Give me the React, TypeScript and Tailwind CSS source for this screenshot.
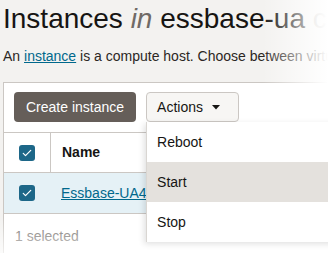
import React from "react";

function Check() {
  return (
    <span className="flex h-4 w-4 items-center justify-center rounded-[3px] bg-[#1d6788]">
      <svg viewBox="0 0 16 16" className="h-3 w-3" fill="none">
        <path d="M3 8.5l3 3 7-7" stroke="#fff" strokeWidth="1.6" strokeLinecap="round" strokeLinejoin="round" />
      </svg>
    </span>
  );
}

function App() {
  const menuItems = ["Reboot", "Start", "Stop"];

  return (
    <div className="relative h-[253px] w-[328px] overflow-hidden bg-[#f3f2f0] font-['Liberation_Sans',Arial,sans-serif] text-[#161513]">
      <div className="pl-[3px]">
        <h1 className="whitespace-nowrap pt-[3px] text-[28px] leading-[32px]">
          Instances <i className="text-[#6f6a66]">in</i> essbase-ua <span className="text-[#bdb9b5]">compartment</span>
        </h1>
        <p className="mt-[11px] whitespace-nowrap text-[14px] leading-5 text-[#2b2724]">
          An <span className="text-[#00688c] underline">instance</span> is a compute host. Choose between virtual machines and bare metal.
        </p>
      </div>

      {/* panel */}
      <div className="ml-[3px] mt-[16px] w-[400px] border border-[#cbc7c3] bg-white">
        <div className="flex gap-[10px] px-[10px] pt-[9px]">
          <button className="h-[30px] rounded-[4px] bg-[#655e59] px-[12px] text-[14px] text-white">
            Create instance
          </button>
          <div className="relative">
            <button className="flex h-[30px] items-center gap-[9px] rounded-[4px] border border-[#cbc7c3] bg-[#f7f6f4] pl-[10px] pr-[18px] text-[14px]">
              Actions
              <svg width="8" height="5" viewBox="0 0 8 5">
                <path d="M0 0h8L4 4.5z" fill="#161513" />
              </svg>
            </button>
            <div className="absolute left-0 top-full z-10 w-[200px] border-l border-[#d9d6d2] bg-white shadow-[-2px_2px_6px_rgba(0,0,0,0.12)]">
              {menuItems.map((item) => (
                <div
                  key={item}
                  className={`flex h-[40px] items-center px-[10px] text-[14px] ${item === "Start" ? "bg-[#e4e1dd]" : ""}`}
                >
                  {item}
                </div>
              ))}
            </div>
          </div>
        </div>

        {/* table */}
        <div className="mt-[10px] border-t border-[#cbc7c3]">
          <div className="flex h-[40px] items-center border-b border-[#cbc7c3]">
            <div className="flex h-full w-[47px] items-center border-r border-[#cbc7c3] pl-[15px]">
              <Check />
            </div>
            <span className="pl-[11px] text-[14px] font-bold">Name</span>
          </div>
          <div className="flex h-[41px] items-center border-b border-[#cbc7c3] bg-[#e5f1f6]">
            <div className="flex w-[47px] items-center pl-[15px]">
              <Check />
            </div>
            <span className="pl-[10px] text-[14px] text-[#00688c] underline">Essbase-UA4</span>
          </div>
          <div className="px-[11px] pt-[12px] pb-[20px] text-[14px] text-[#6f6b67]">1 selected</div>
        </div>
      </div>

      {/* screenshot fade */}
      <div className="pointer-events-none absolute inset-0 bg-[linear-gradient(to_right,rgba(255,255,255,0)_80%,rgba(255,255,255,1)_100%)]" />
      <div className="pointer-events-none absolute inset-0 bg-[linear-gradient(to_bottom,rgba(255,255,255,0)_86%,rgba(255,255,255,0.7)_100%)]" />
    </div>
  );
}

export default App;
